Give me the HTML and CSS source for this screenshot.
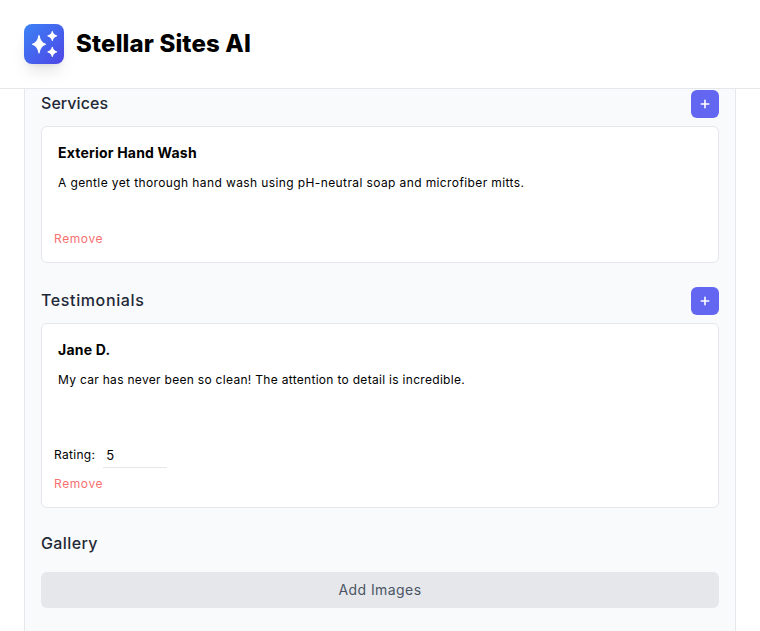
FILE: index.html
```html
<!DOCTYPE html>
<html lang="en">
<head>
<meta charset="utf-8">
<title>Stellar Sites AI</title>
<link rel="stylesheet" href="styles.css">
</head>
<body>
<header class="topbar">
  <div class="logo">
    <svg width="40" height="40" viewBox="0 0 40 40" fill="#fff" stroke="#fff" stroke-width="1.200" stroke-linejoin="round"><path d="M15 11.500Q16.200 18.700 21.500 20.300Q16.200 21.900 15 29Q13.800 21.900 8.500 20.300Q13.800 18.700 15 11.500Z"/><path d="M28.300 7.500Q28.900 11 32.500 11.900Q28.900 12.800 28.300 16.300Q27.700 12.800 24 11.900Q27.700 11 28.300 7.500Z"/><path d="M28.300 23.300Q28.900 26.800 32.500 27.800Q28.900 28.800 28.300 32.300Q27.700 28.800 24 27.800Q27.700 26.800 28.300 23.300Z"/></svg>
  </div>
  <h1 class="brand">Stellar Sites AI</h1>
</header>
<main class="panel">
  <section class="group">
    <div class="group-head">
      <h2 class="group-title title-services">Services</h2>
      <button class="add-btn" type="button"><svg width="10" height="10" viewBox="0 0 10 10" stroke="#fff" stroke-width="1.600" stroke-linecap="round"><path d="M5 1.300v7.400M1.300 5h7.400"/></svg></button>
    </div>
    <article class="card card-service">
      <div class="card-name">Exterior Hand Wash</div>
      <p class="card-text">A gentle yet thorough hand wash using pH-neutral soap and microfiber mitts.</p>
      <div class="remove">Remove</div>
    </article>
  </section>
  <section class="group">
    <div class="group-head">
      <h2 class="group-title title-testimonials">Testimonials</h2>
      <button class="add-btn" type="button"><svg width="10" height="10" viewBox="0 0 10 10" stroke="#fff" stroke-width="1.600" stroke-linecap="round"><path d="M5 1.300v7.400M1.300 5h7.400"/></svg></button>
    </div>
    <article class="card card-testimonial">
      <div class="card-name">Jane D.</div>
      <p class="card-text">My car has never been so clean! The attention to detail is incredible.</p>
      <div class="rating">
        <span class="rating-label">Rating:</span>
        <span class="rating-value">5</span>
      </div>
      <div class="remove">Remove</div>
    </article>
  </section>
  <section class="gallery">
    <h2 class="group-title">Gallery</h2>
    <button class="add-images" type="button">Add Images</button>
  </section>
</main>
</body>
</html>
```
FILE: styles.css
```css
* { box-sizing: border-box; }
html, body { margin: 0; height: 631px; overflow: hidden; }
body { background: #fff; font-family: Inter, "Liberation Sans", sans-serif; color: #000; }

.topbar { height: 89px; display: flex; align-items: center; gap: 12px; padding: 0 24px; background: #fff; border-bottom: 1px solid #e5e7eb; }
.logo { width: 40px; height: 40px; border-radius: 8px; display: flex; align-items: center; justify-content: center; background: linear-gradient(135deg, #3b82f6, #4f46e5); box-shadow: 0 10px 15px -3px rgba(0,0,0,.1), 0 4px 6px -4px rgba(0,0,0,.1); }
.brand { margin: 0; font-size: 24px; line-height: 32px; font-weight: 800; letter-spacing: .15px; }

.panel { margin: 0 24px; height: 542px; padding: 1px 16px 0; background: #f9fafb; border: solid #e5e7eb; border-width: 0 1px; }
.group { margin-bottom: 24px; }
.group-head { display: flex; justify-content: space-between; align-items: center; height: 28px; margin-bottom: 8px; }
.group-title { margin: 0 0 2px; font-size: 16px; line-height: 24px; font-weight: 500; color: #1f2937; letter-spacing: .4px; }
.title-services { letter-spacing: .05px; }
.title-testimonials { letter-spacing: .62px; }
.add-btn { width: 28px; height: 28px; padding: 0; border: 0; border-radius: 6px; background: #6366f1; display: flex; align-items: center; justify-content: center; }

.card { background: #fff; border: 1px solid #e5e7eb; border-radius: 6px; padding: 16px 12px 16px; }
.card-service { height: 137px; }
.card-testimonial { height: 185px; }
.card-name { margin-left: 4px; font-size: 14px; line-height: 20px; font-weight: 700; letter-spacing: .2px; }
.card-text { margin: 10px 0 0 4px; height: 58px; font-size: 12px; line-height: 20px; letter-spacing: .39px; }
.card-testimonial .card-text { height: 73px; letter-spacing: .3px; }
.rating { display: flex; align-items: flex-start; gap: 8px; height: 25px; font-size: 12px; line-height: 24px; letter-spacing: .3px; }
.rating-value { display: block; width: 64px; height: 25px; padding: 0 3px; line-height: 24px; font-size: 13px; border-bottom: 1px solid #e5e7eb; }
.remove { margin-top: 8px; font-size: 12px; line-height: 16px; color: #f87171; letter-spacing: .6px; }
.card-service .remove { margin-top: 0; }

.gallery .group-title { margin-top: -1px; }
.add-images { display: block; width: 100%; height: 36px; margin-top: 17px; border: 0; border-radius: 6px; background: #e5e7eb; color: #4b5563; font: 400 14px/20px Inter, "Liberation Sans", sans-serif; letter-spacing: .42px; }
```
